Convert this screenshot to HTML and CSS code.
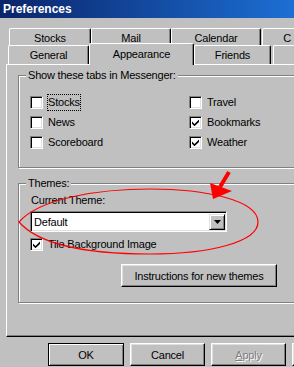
FILE: index.html
```html
<!DOCTYPE html>
<html lang="en">

<head>
    <meta charset="UTF-8">
    <meta name="viewport" content="width=device-width, initial-scale=1.0">
    <title>Preferences</title>
    <link rel="stylesheet" href="styles.css">
</head>

<body>
    <div class="window">
        <div class="titlebar">Preferences</div>

        <div class="tabs">
            <div class="tab-row row-back">
                <div class="tab tab-stocks">Stocks</div>
                <div class="tab tab-mail">Mail</div>
                <div class="tab tab-calendar">Calendar</div>
                <div class="tab tab-more">C</div>
            </div>
            <div class="tab-row row-front">
                <div class="tab tab-general">General</div>
                <div class="tab tab-appearance active">Appearance</div>
                <div class="tab tab-friends">Friends</div>
                <div class="tab tab-more2"></div>
            </div>
        </div>

        <div class="panel">
            <div class="group">
                <div class="group-title">Show these tabs in Messenger:</div>
                <div class="check-grid">
                    <div class="check">
                        <span class="box"></span>
                        <span class="label focus">Stocks</span>
                    </div>
                    <div class="check">
                        <span class="box"></span>
                        <span class="label">Travel</span>
                    </div>
                    <div class="check">
                        <span class="box"></span>
                        <span class="label">News</span>
                    </div>
                    <div class="check">
                        <span class="box">
                            <svg width="7" height="7" viewBox="0 0 7 7"><polygon points="0,2.5 2.5,5 7,0.5 7,3 2.5,7.2 0,4.7" /></svg>
                        </span>
                        <span class="label">Bookmarks</span>
                    </div>
                    <div class="check">
                        <span class="box"></span>
                        <span class="label">Scoreboard</span>
                    </div>
                    <div class="check">
                        <span class="box">
                            <svg width="7" height="7" viewBox="0 0 7 7"><polygon points="0,2.5 2.5,5 7,0.5 7,3 2.5,7.2 0,4.7" /></svg>
                        </span>
                        <span class="label">Weather</span>
                    </div>
                </div>
            </div>

            <div class="group group-themes">
                <div class="group-title">Themes:</div>
                <div class="field-label">Current Theme:</div>
                <div class="select">
                    <span class="select-value">Default</span>
                    <span class="select-btn">
                        <svg width="7" height="4" viewBox="0 0 7 4"><polygon points="0,0 7,0 3.5,4" /></svg>
                    </span>
                </div>
                <div class="check tile-row">
                    <span class="box">
                        <svg width="7" height="7" viewBox="0 0 7 7"><polygon points="0,2.5 2.5,5 7,0.5 7,3 2.5,7.2 0,4.7" /></svg>
                    </span>
                    <span class="label">Tile Background Image</span>
                </div>
                <button class="btn btn-instructions">Instructions for new themes</button>
            </div>
        </div>

        <div class="buttons">
            <button class="btn btn-default">OK</button>
            <button class="btn">Cancel</button>
            <button class="btn btn-disabled"><u>A</u>pply</button>
            <button class="btn"></button>
        </div>

        <!-- red markup drawn over the dialog -->
        <svg class="annotation" width="294" height="367" viewBox="0 0 294 367">
            <path d="M19 222 C40 198 100 189 150 189 C205 189 258 200 258 222 C258 242 210 254 150 254 C90 254 40 246 19 222 Z"
                fill="none" stroke="#ff0000" stroke-width="1.2" />
            <line x1="229" y1="172" x2="220" y2="187" stroke="#ff0000" stroke-width="4" />
            <polygon points="210,183 232,191 213,199" fill="#ff0000" />
        </svg>
    </div>
</body>

</html>
```

FILE: styles.css
```css
body {
    margin: 0;
    background: #c0c0c0;
    font-family: "Liberation Sans", Arial, sans-serif;
    font-size: 11px;
    letter-spacing: -0.2px;
    color: #000;
}

.window {
    position: relative;
    width: 294px;
    height: 367px;
    overflow: hidden;
}

.titlebar {
    height: 18px;
    padding-left: 3px;
    background: linear-gradient(to right, #0a246a, #1c6fd4);
    color: #fff;
    font-size: 12px;
    font-weight: bold;
    letter-spacing: 0;
    line-height: 18px;
}

.tabs {
    margin-top: 10px;
}

.tab-row {
    display: flex;
}

.row-back {
    height: 17px;
    padding-left: 9px;
}

.row-front {
    height: 19px;
    padding-left: 8px;
}

.tab {
    box-sizing: border-box;
    display: flex;
    align-items: center;
    justify-content: center;
    flex-shrink: 0;
    border-top: 1px solid #fff;
    border-left: 1px solid #fff;
    border-right: 1px solid #000;
    border-radius: 2px 2px 0 0;
    box-shadow: inset -1px 0 #808080;
    background: #c0c0c0;
}

.row-back .tab {
    padding-top: 1px;
}

.tab-stocks { width: 82px; }
.tab-mail { width: 80px; }
.tab-calendar { width: 90px; }
.tab-more { width: 50px; margin-left: 1px; }

.tab-general { width: 81px; }
.tab-appearance { width: 105px; }
.tab-friends { width: 77px; }
.tab-more2 { width: 40px; margin-left: 2px; }

.tab.active {
    position: relative;
    z-index: 1;
    height: 22px;
    margin-top: -2px;
    padding-bottom: 2px;
}

.panel {
    width: 320px;
    margin-left: 6px;
    padding: 10px 0 33px 11px;
    border-top: 1px solid #fff;
    border-left: 1px solid #fff;
    border-bottom: 1px solid #000;
    box-shadow: inset 0 -1px #808080;
}

.group {
    border: 1px solid #808080;
    box-shadow: inset 1px 1px #fff, 1px 1px #fff;
    padding-bottom: 18px;
}

.group-title {
    width: fit-content;
    margin: -7px 0 0 7px;
    padding: 0 2px;
    line-height: 13px;
    background: #c0c0c0;
}

.check-grid {
    display: grid;
    grid-template-columns: 159px auto;
    row-gap: 7px;
    margin-top: 14px;
    padding-left: 11px;
}

.check {
    display: flex;
    align-items: center;
    gap: 4px;
    height: 13px;
}

.box {
    box-sizing: border-box;
    width: 13px;
    height: 13px;
    flex-shrink: 0;
    display: flex;
    align-items: center;
    justify-content: center;
    border: 1px solid;
    border-color: #808080 #fff #fff #808080;
    box-shadow: inset 1px 1px #000, inset -1px -1px #dfdfdf;
    background: #fff;
}

.box svg {
    fill: #000;
}

.label {
    padding: 0 1px;
    line-height: 13px;
    white-space: nowrap;
}

.label.focus {
    padding: 2px 1px;
    margin: -2px 0;
    outline: 1px dotted #000;
    outline-offset: -1px;
}

.group-themes {
    margin-top: 15px;
    padding-bottom: 15px;
}

.field-label {
    margin: 4px 0 0 12px;
    line-height: 13px;
}

.select {
    box-sizing: border-box;
    width: 197px;
    height: 21px;
    margin: 4px 0 0 11px;
    padding: 2px 1px 1px 2px;
    display: flex;
    align-items: center;
    border: 1px solid;
    border-color: #808080 #fff #fff #808080;
    box-shadow: inset 1px 1px #000, inset -1px -1px #dfdfdf;
    background: #fff;
}

.select-value {
    flex: 1;
    margin-left: 1px;
}

.select-btn {
    box-sizing: border-box;
    width: 16px;
    height: 16px;
    display: flex;
    align-items: center;
    justify-content: center;
    border: 1px solid;
    border-color: #dfdfdf #000 #000 #dfdfdf;
    box-shadow: inset 1px 1px #fff, inset -1px -1px #808080;
    background: #c0c0c0;
}

.tile-row {
    margin: 6px 0 0 11px;
}

.btn {
    box-sizing: border-box;
    height: 23px;
    padding: 0;
    display: flex;
    align-items: center;
    justify-content: center;
    font: inherit;
    letter-spacing: inherit;
    color: #000;
    border: 1px solid;
    border-color: #fff #000 #000 #fff;
    box-shadow: inset -1px -1px #808080, inset 1px 1px #dfdfdf;
    background: #c0c0c0;
}

.btn-instructions {
    width: 156px;
    margin: 13px 0 0 102px;
}

.buttons {
    display: flex;
    gap: 6px;
    margin-top: 6px;
    padding-left: 48px;
}

.buttons .btn {
    width: 75px;
    flex-shrink: 0;
}

.buttons .btn-default {
    width: 76px;
    border-color: #000;
    box-shadow: inset 1px 1px #fff, inset -1px -1px #808080;
}

.btn-disabled {
    color: #808080;
    text-shadow: 1px 1px #fff;
}

.annotation {
    position: absolute;
    top: 0;
    left: 0;
    pointer-events: none;
}
```
